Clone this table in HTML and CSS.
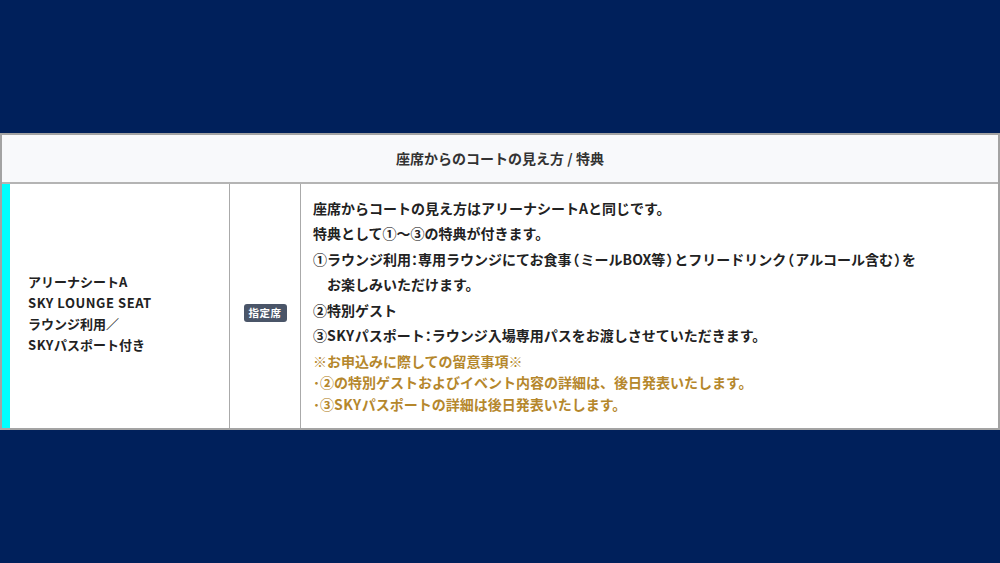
FILE: index.html
```html
<!DOCTYPE html>
<html lang="ja">
<head>
<meta charset="utf-8">
<title>座席からのコートの見え方 / 特典</title>
<link rel="stylesheet" href="styles.css">
</head>
<body>
<div class="stage">
  <div class="table">
    <div class="head">座席からのコートの見え方 / 特典</div>
    <div class="row">
      <div class="accent"></div>
      <div class="cell name">
        <div class="name-text">アリーナシートA<br><span class="latin">SKY LOUNGE SEAT</span><br>ラウンジ利用／<br><span class="latin">SKY</span>パスポート付き</div>
      </div>
      <div class="cell type"><span class="badge">指定席</span></div>
      <div class="cell desc">
        <p class="line">座席からコートの見え方はアリーナシートAと同じです。</p>
        <p class="line">特典として①〜③の特典が付きます。</p>
        <p class="line">①ラウンジ利用<span class="h">：</span>専用ラウンジにてお食事<span class="h p">（</span>ミールBOX等<span class="h p">）</span>とフリードリンク<span class="h p">（</span>アルコール含む<span class="h p">）</span>を</p>
        <p class="line indent">お楽しみいただけます。</p>
        <p class="line">②特別ゲスト</p>
        <p class="line">③<span class="latin">SKY</span>パスポート<span class="h">：</span>ラウンジ入場専用パスをお渡しさせていただきます。</p>
        <div class="notes">
          <p class="note">※お申込みに際しての留意事項※</p>
          <p class="note"><span class="dot">･</span>②の特別ゲストおよびイベント内容の詳細は、後日発表いたします。</p>
          <p class="note"><span class="dot">･</span>③<span class="latin">SKY</span>パスポートの詳細は後日発表いたします。</p>
        </div>
      </div>
    </div>
  </div>
</div>
</body>
</html>
```

FILE: styles.css
```css
* { box-sizing: border-box; }
html, body { margin: 0; padding: 0; }
body {
  background: #00205b;
  font-family: "Noto Sans CJK JP", "Noto Sans", sans-serif;
  font-weight: 700;
  color: #222;
}
.stage {
  width: 1000px;
  height: 563px;
  display: flex;
  flex-direction: column;
  justify-content: center;
}
.table {
  border: 2px solid #a3a3a3;
  background: #fff;
}
.head {
  background: #f8f9fb;
  height: 49px;
  border-bottom: 2px solid #b4b4b4;
  display: flex;
  align-items: center;
  justify-content: center;
  font-size: 14px;
  color: #333;
  padding-bottom: 1px;
}
.row {
  display: grid;
  grid-template-columns: 8px 219px 71px 1fr;
}
.accent { background: #00ffff; }
.cell { border-left: 1px solid #aaaaaa; }
.name {
  border-left: none;
  display: flex;
  align-items: center;
  padding: 16px 0 0 18px;
}
.name-text {
  font-size: 13px;
  line-height: 20.8px;
  color: #222;
}
.latin { letter-spacing: 0.55px; }
.type {
  display: flex;
  align-items: center;
  justify-content: center;
  padding-top: 14px;
}
.badge {
  background: #4a5568;
  color: #fff;
  font-size: 10.5px;
  line-height: 18px;
  padding: 0 5px;
  border-radius: 3px;
  letter-spacing: 0.5px;
}
.desc {
  padding: 12px 12px 13px 12px;
  font-size: 14px;
}
.line {
  margin: 0;
  line-height: 25.5px;
}
.h { font-feature-settings: "halt"; }
.p { margin: 0 1px; }
.indent { padding-left: 14px; }
.notes { color: #b5872c; margin-top: 2px; }
.note {
  margin: 0;
  line-height: 21.5px;
}
.dot { display: inline-block; width: 7px; }
```
